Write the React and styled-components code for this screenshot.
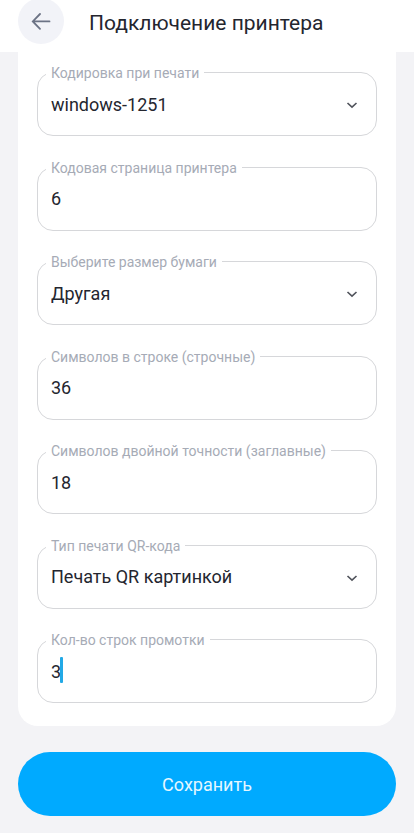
import React, { useState } from 'react';
import styled, { createGlobalStyle } from 'styled-components';

const GlobalStyle = createGlobalStyle`
	* {
		box-sizing:border-box;
	}
	body {
		margin:0;
		background-color:#f3f3f6;
		font-family:Roboto, "Noto Sans", sans-serif;
		color:#24262f;
	}
	input, select, button {
		font-family:inherit;
	}
`;

const Page = styled.div`
	min-height:100vh;
	display:flex;
	flex-direction:column;
`;

const Header = styled.header`
	display:flex;
	align-items:center;
	gap:25px;
	margin-top:-2px;
	padding:0 18px 8px;
	background-color:white;
`;

const BackButton = styled.button`
	display:flex;
	align-items:center;
	justify-content:center;
	flex-shrink:0;
	width:46px;
	height:46px;
	padding:0;
	border:none;
	border-radius:50%;
	background-color:#f2f3f8;
	color:#6c7385;
	cursor:pointer;
`;

const Title = styled.h1`
	margin:0;
	padding-top:4px;
	font-size:21px;
	line-height:28px;
	font-weight:400;
`;

const Form = styled.form`
	flex:1;
	display:flex;
	flex-direction:column;
	gap:26px;
	padding:0 18px 17px;
`;

const Card = styled.div`
	flex:1;
	display:flex;
	flex-direction:column;
	justify-content:space-between;
	gap:28px;
	padding:20px 19px 23px;
	border-radius:0 0 20px 20px;
	background-color:white;
`;

const FieldBox = styled.div`
	position:relative;
	border:1px solid #d6d7da;
	border-radius:16px;
`;

const Label = styled.label`
	position:absolute;
	top:-8px;
	left:8px;
	padding:0 5px;
	background-color:white;
	color:#a6abb6;
	font-size:14px;
	line-height:16px;
`;

const Input = styled.input`
	display:block;
	width:100%;
	height:62px;
	padding:0 13px;
	border:none;
	border-radius:16px;
	outline:none;
	background:transparent;
	color:inherit;
	font-size:18px;
	caret-color:${props => props.$active ? 'transparent' : '#00a3f5'};
`;

const Select = styled(Input).attrs({ as: 'select' })`
	appearance:none;
	padding-right:40px;
	cursor:pointer;
`;

const Arrow = styled.svg`
	position:absolute;
	top:26px;
	right:18px;
	pointer-events:none;
`;

const Caret = styled.span`
	position:absolute;
	top:17px;
	left:calc(12px + 1ch);
	width:3px;
	height:26px;
	border-radius:1px;
	background-color:#22a9e6;
	font-size:18px;
`;

const SaveButton = styled.button`
	height:64px;
	border:none;
	border-radius:32px;
	background-color:#00aaff;
	color:#e4f7ff;
	font-size:18px;
	cursor:pointer;
`;

const fields = [
	{ name: 'encoding', label: 'Кодировка при печати', value: 'windows-1251', options: ['windows-1251'] },
	{ name: 'codePage', label: 'Кодовая страница принтера', value: '6' },
	{ name: 'paper', label: 'Выберите размер бумаги', value: 'Другая', options: ['Другая'] },
	{ name: 'chars', label: 'Символов в строке (строчные)', value: '36' },
	{ name: 'charsDouble', label: 'Символов двойной точности (заглавные)', value: '18' },
	{ name: 'qrType', label: 'Тип печати QR-кода', value: 'Печать QR картинкой', options: ['Печать QR картинкой'] },
	{ name: 'feed', label: 'Кол-во строк промотки', value: '3', active: true },
];

const Field = ({ name, label, value, options, active }) => {
	const [current, setCurrent] = useState(value);
	const [touched, setTouched] = useState(false);
	const showCaret = active && !touched;

	return (
		<FieldBox>
			<Label htmlFor={name}>{label}</Label>
			{options ? (
				<>
					<Select id={name} name={name} value={current} onChange={e => setCurrent(e.target.value)}>
						{options.map(option => <option key={option}>{option}</option>)}
					</Select>
					<Arrow width="12" height="12" viewBox="0 0 12 12" fill="none" stroke="#50535b" strokeWidth="1.6" aria-hidden="true">
						<path d="M1.5 4L6 8.2L10.5 4" />
					</Arrow>
				</>
			) : (
				<Input
					id={name}
					name={name}
					inputMode="numeric"
					value={current}
					$active={showCaret}
					onFocus={() => setTouched(true)}
					onChange={e => setCurrent(e.target.value)}
				/>
			)}
			{showCaret && <Caret />}
		</FieldBox>
	)
}

const App = () => {
	return (
		<Page>
			<GlobalStyle />
			<Header>
				<BackButton type="button" aria-label="Назад">
					<svg width="20" height="18" viewBox="0 0 20 18" fill="none" stroke="currentColor" strokeWidth="1.8" strokeLinecap="round" aria-hidden="true">
						<path d="M18.5 9.4H1.8M9 2L1.8 9.4L9 16.8" />
					</svg>
				</BackButton>
				<Title>Подключение принтера</Title>
			</Header>
			<Form onSubmit={e => e.preventDefault()}>
				<Card>
					{fields.map(field => <Field key={field.name} {...field} />)}
				</Card>
				<SaveButton type="submit">Сохранить</SaveButton>
			</Form>
		</Page>
	)
}

export default App;
